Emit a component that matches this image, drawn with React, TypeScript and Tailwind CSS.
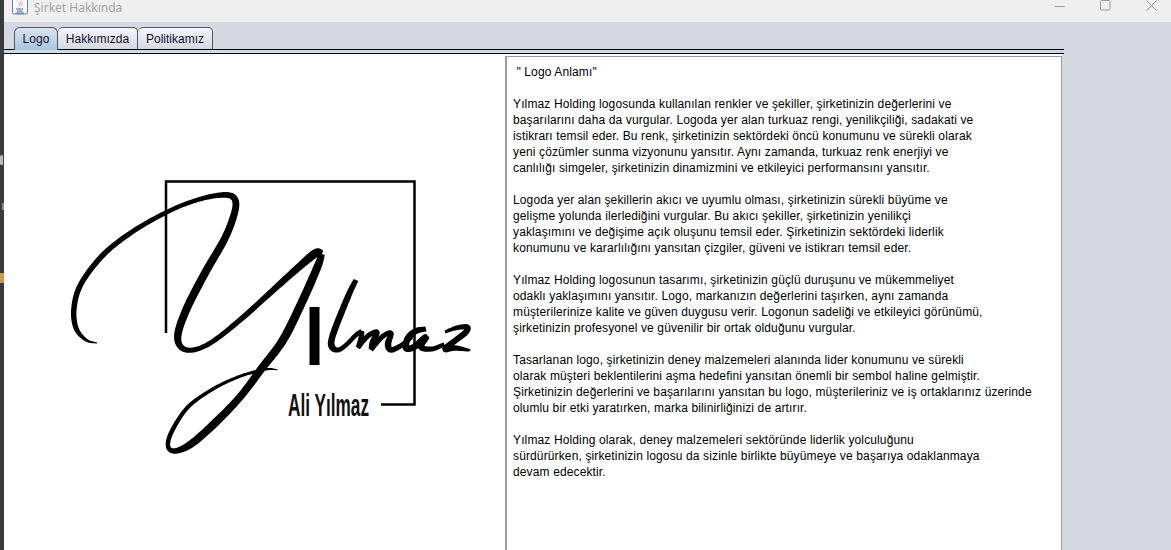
import { useMemo } from "react";

type Pt = [number, number, number];

// smooth a list of [x, y, width] points into a filled brush stroke
function ribbon(pts: Pt[]) {
  const left: string[] = [];
  const right: string[] = [];
  const at = (i: number) => pts[Math.max(0, Math.min(pts.length - 1, i))];
  for (let i = 0; i < pts.length - 1; i++) {
    const [p0, p1, p2, p3] = [at(i - 1), at(i), at(i + 1), at(i + 2)];
    for (let s = 0; s < 12; s++) {
      const t = s / 12;
      const c = (k: number) =>
        0.5 * (2 * p1[k] + (p2[k] - p0[k]) * t + (2 * p0[k] - 5 * p1[k] + 4 * p2[k] - p3[k]) * t * t + (3 * p1[k] - p0[k] - 3 * p2[k] + p3[k]) * t * t * t);
      const d = (k: number) =>
        0.5 * (p2[k] - p0[k] + 2 * (2 * p0[k] - 5 * p1[k] + 4 * p2[k] - p3[k]) * t + 3 * (3 * p1[k] - p0[k] - 3 * p2[k] + p3[k]) * t * t);
      const dx = d(0);
      const dy = d(1);
      const len = Math.hypot(dx, dy) || 1;
      const w = Math.max(c(2), 0.4) / 2;
      left.push(`${(c(0) - (dy / len) * w).toFixed(1)} ${(c(1) + (dx / len) * w).toFixed(1)}`);
      right.push(`${(c(0) + (dy / len) * w).toFixed(1)} ${(c(1) - (dx / len) * w).toFixed(1)}`);
    }
  }
  return `M${left.join("L")}L${right.reverse().join("L")}Z`;
}

const strokes: Pt[][] = [
  // big Y, first swoop
  [
    [97, 343, 1], [86, 340, 3], [76, 328, 5], [74, 308, 5.5], [81, 284, 5.5], [103, 255, 5.5], [132, 232, 5], [167, 212, 4.5],
    [197, 200, 4.5], [222, 195, 5.5], [234, 198, 6.5], [235, 211, 7], [225, 238, 7.5], [205, 273, 8], [187, 308, 8], [178, 334, 7.5],
    [181, 347, 6], [193, 350, 5], [212, 342, 5], [240, 320, 5.5], [270, 293, 6], [300, 266, 7.5], [316, 253, 8.5], [322, 254, 6],
  ],
  // Y descender and loop
  [
    [322, 254, 6], [317, 268, 8], [302, 302, 8.5], [283, 340, 8.5], [262, 368, 8], [240, 397, 7.5], [215, 423, 8], [191, 444, 7.5], [175, 451, 5.5],
    [168, 446, 4.5], [172, 431, 4.5], [188, 407, 4], [213, 389, 3.5], [238, 377, 3], [258, 371, 3], [270, 369, 2], [278, 370, 0.8],
  ],
  // l
  [
    [356, 280, 5], [350, 292, 6], [340, 316, 6.5], [332, 338, 6.5], [332, 347, 6.5], [338, 350, 5], [346, 345, 4.5], [356, 335, 4.5], [362, 331, 4.5],
  ],
  // m
  [[362, 331, 4.5], [361, 340, 6], [358, 348, 5]],
  [[358, 348, 4], [368, 336, 5], [377, 332, 5], [373, 342, 6.5], [371, 350, 5]],
  [[371, 350, 4.5], [382, 337, 5], [391, 333, 5], [388, 344, 6.5], [391, 350, 5.5], [402, 345, 5], [412, 336, 5]],
  // a
  [[426, 329, 5], [416, 331, 6], [408, 338, 6.5], [406, 348, 6.5], [414, 347, 6.5], [426, 337, 6.5], [421, 347, 6], [432, 349, 5], [445, 344, 4]],
  // z
  [[445, 332, 3], [456, 328, 4.5], [467, 327, 5.5], [466, 332, 6], [456, 340, 6], [445, 349, 6], [455, 348, 5.5], [468, 350, 3], [470, 351, 0.8]],
];

const text = [
  ' " Logo Anlamı"',
  "",
  "Yılmaz Holding logosunda kullanılan renkler ve şekiller, şirketinizin değerlerini ve",
  "başarılarını daha da vurgular. Logoda yer alan turkuaz rengi, yenilikçiliği, sadakati ve",
  "istikrarı temsil eder. Bu renk, şirketinizin sektördeki öncü konumunu ve sürekli olarak",
  "yeni çözümler sunma vizyonunu yansıtır. Aynı zamanda, turkuaz renk enerjiyi ve",
  "canlılığı simgeler, şirketinizin dinamizmini ve etkileyici performansını yansıtır.",
  "",
  "Logoda yer alan şekillerin akıcı ve uyumlu olması, şirketinizin sürekli büyüme ve",
  "gelişme yolunda ilerlediğini vurgular. Bu akıcı şekiller, şirketinizin yenilikçi",
  "yaklaşımını ve değişime açık oluşunu temsil eder. Şirketinizin sektördeki liderlik",
  "konumunu ve kararlılığını yansıtan çizgiler, güveni ve istikrarı temsil eder.",
  "",
  "Yılmaz Holding logosunun tasarımı, şirketinizin güçlü duruşunu ve mükemmeliyet",
  "odaklı yaklaşımını yansıtır. Logo, markanızın değerlerini taşırken, aynı zamanda",
  "müşterilerinize kalite ve güven duygusu verir. Logonun sadeliği ve etkileyici görünümü,",
  "şirketinizin profesyonel ve güvenilir bir ortak olduğunu vurgular.",
  "",
  "Tasarlanan logo, şirketinizin deney malzemeleri alanında lider konumunu ve sürekli",
  "olarak müşteri beklentilerini aşma hedefini yansıtan önemli bir sembol haline gelmiştir.",
  "Şirketinizin değerlerini ve başarılarını yansıtan bu logo, müşterileriniz ve iş ortaklarınız üzerinde",
  "olumlu bir etki yaratırken, marka bilinirliğinizi de artırır.",
  "",
  "Yılmaz Holding olarak, deney malzemeleri sektöründe liderlik yolculuğunu",
  "sürdürürken, şirketinizin logosu da sizinle birlikte büyümeye ve başarıya odaklanmaya",
  "devam edecektir.",
].join("\n");

function JavaIcon() {
  return (
    <svg width="16" height="15" viewBox="0 0 16 15" className="shrink-0">
      <rect x="0.5" y="-2" width="15" height="16" rx="1.5" fill="#f4f7fb" stroke="#5b7fa6" />
      <path d="M9.5 1C10 3 6.5 4 7.5 6.5C6 5 7 3.5 9.5 1Z M11 3C11 5 8.5 5 9.5 7C8.5 6 9 4.5 11 3Z" fill="#e8792b" />
      <path d="M4 8.5H11V9.5H4Z M5 10.5H10.5V11.5H5Z M3.5 12.5H12V13.5H3.5Z" fill="#4a6f9c" />
    </svg>
  );
}

function Logo() {
  const paths = useMemo(() => strokes.map(ribbon), []);
  return (
    <svg viewBox="4 54 501 496" className="block w-full h-full">
      <path d="M166 333V181.5H414.5V404.5H381" fill="none" stroke="#000" strokeWidth="2.5" />
      <rect x="309.5" y="307" width="10" height="58" fill="#000" />
      {paths.map((d, i) => (
        <path key={i} d={d} fill="#000" />
      ))}
      <text x="288" y="416" textLength="81" lengthAdjust="spacingAndGlyphs" fontFamily="'Liberation Sans', sans-serif" fontWeight="700" fontSize="32" fill="#111">
        Ali Yılmaz
      </text>
    </svg>
  );
}

export default function App() {
  return (
    <div className="w-[1171px] h-[550px] overflow-hidden flex bg-[#d6d9e2] font-['Liberation_Sans',sans-serif]">
      {/* strip of the window behind */}
      <div className="w-[4px] shrink-0 bg-[#3a3b3d]">
        <div className="mt-[155px] h-[10px] w-[3px] rounded-[2px] bg-[#b9bcc2]" />
        <div className="mt-[38px] h-[7px] w-[2px] ml-[2px] bg-[#8a8c90]" />
        <div className="mt-[63px] h-[10px] bg-[#c99a55]" />
      </div>

      <div className="flex-1 min-w-0 flex flex-col">
        {/* title bar */}
        <div className="h-[22px] shrink-0 bg-[#f0f0f0] flex items-start pl-[8px]">
          <JavaIcon />
          <span className="ml-[6px] mt-[1px] text-[12px] leading-[14px] text-[#a3a3a3] font-['Noto_Sans',sans-serif]">Şirket Hakkında</span>
          <div className="ml-auto flex mr-[-3px]">
            <div className="w-[46px] h-[12px] flex items-start justify-center">
              <svg width="11" height="11" viewBox="0 0 11 11"><path d="M0.5 6.5H10.5" stroke="#9a9a9a" /></svg>
            </div>
            <div className="w-[46px] h-[12px] flex items-start justify-center">
              <svg width="11" height="11" viewBox="0 0 11 11"><rect x="0.5" y="0.5" width="9.5" height="9.5" rx="1" fill="none" stroke="#9a9a9a" /></svg>
            </div>
            <div className="w-[46px] h-[12px] flex items-start justify-center">
              <svg width="11" height="11" viewBox="0 0 11 11"><path d="M0.5 0.5L10.5 10.5M10.5 0.5L0.5 10.5" stroke="#9a9a9a" /></svg>
            </div>
          </div>
        </div>

        <div className="w-[1060px] flex-1 min-h-0 flex flex-col">
          {/* tabs */}
          <div className="h-[28px] shrink-0 flex items-end pl-[10px] border-b border-black">
            <div className="w-[44px] h-[23px] mb-[-1px] rounded-t-[6px] border border-b-0 border-[#50586a] bg-gradient-to-b from-[#dbe5ee] to-[#a9c4db] flex items-center justify-center text-[12px] tracking-[0.13px] text-[#101030] relative">
              Logo
            </div>
            <div className="w-[80px] h-[22px] rounded-t-[5px] border border-l-0 border-b-0 border-[#50586a] bg-gradient-to-b from-[#f6f6f9] to-[#d6d8e1] flex items-center justify-center text-[12px] text-[#101030]">
              Hakkımızda
            </div>
            <div className="w-[75px] h-[22px] rounded-t-[5px] border border-l-0 border-b-0 border-[#50586a] bg-gradient-to-b from-[#f6f6f9] to-[#d6d8e1] flex items-center justify-center text-[12px] text-[#101030]">
              Politikamız
            </div>
          </div>
          <div className="h-[4px] shrink-0 bg-[#c8dcee] border-b border-black" />

          {/* content */}
          <div className="flex-1 min-h-0 flex w-[1058px]">
            <div className="w-[501px] shrink-0 bg-white">
              <Logo />
            </div>
            <div className="flex-1 min-w-0 pt-[2px] bg-white">
              <div className="h-[500px] bg-white border border-l-2 border-[#9a9aa8] border-b-0 pt-[7px] pl-[6px] text-[12px] leading-[16px] tracking-[0.13px] text-black whitespace-pre">
                {text}
              </div>
            </div>
          </div>
        </div>
      </div>
    </div>
  );
}
